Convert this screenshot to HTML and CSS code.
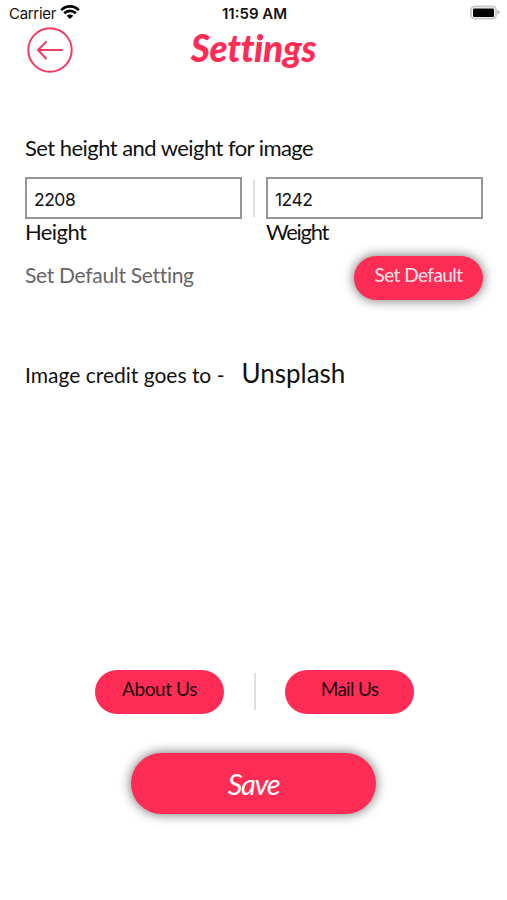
FILE: index.html
```html
<!DOCTYPE html>
<html lang="en">
<head>
<meta charset="utf-8">
<title>Settings</title>
<link rel="stylesheet" href="styles.css">
</head>
<body>
<div class="status">
  <div class="carrier"><span>Carrier</span>
    <svg width="20" height="15" viewBox="0 0 20 15"><path d="M1.2 5.1C6.3.1 13.700.1 18.8 5.1M4.2 8.3c3.4-3.2 8.2-3.2 11.6 0" fill="none" stroke="#000" stroke-width="2.6"/><path d="M6.7 10.8c2-1.7 4.6-1.7 6.6 0L10 14.1z"/></svg>
  </div>
  <div class="time">11:59 AM</div>
  <svg class="battery" width="31" height="15" viewBox="0 0 31 15"><rect x="2" y="1.500" width="25" height="12" rx="3.5" fill="#fff" stroke="#cbcbcb" stroke-width="2"/><rect x="4" y="3.500" width="21" height="8.500" rx="1"/><path d="M28.500 5v4.500q2-.8 2-2.200t-2-2.300" fill="#aaa"/></svg>
</div>
<header class="header">
  <button class="back" aria-label="Back"><svg width="46" height="46" viewBox="0 0 46 46" fill="none" stroke="#f23b60" stroke-width="2"><circle cx="23" cy="23" r="21.7"/><path d="M35 23H11.5M19 15l-8 8 8 8.500" stroke-linecap="round" stroke-linejoin="round"/></svg></button>
  <h1 class="title">Settings</h1>
</header>
<main class="content">
  <h2 class="heading"><span class="t-heading">Set height and weight for image</span></h2>
  <div class="fields">
    <label class="field"><input value="2208"><span class="t-height">Height</span></label>
    <i class="divider"></i>
    <label class="field"><input value="1242"><span class="t-weight">Weight</span></label>
  </div>
  <div class="default-row"><span class="t-setting">Set Default Setting</span><button class="pill shadow light"><span class="t-default">Set Default</span></button></div>
  <div class="credit"><span class="t-credit">Image credit goes to -</span><span class="t-unsplash">Unsplash</span></div>
  <div class="links">
    <button class="pill"><span class="t-about">About Us</span></button>
    <i class="divider"></i>
    <button class="pill"><span class="t-mail">Mail Us</span></button>
  </div>
  <button class="save shadow"><span class="t-save">Save</span></button>
</main>
</body>
</html>
```
FILE: styles.css
```css
* { box-sizing: border-box; }
body { margin: 0; width: 507px; height: 900px; overflow: hidden; background: #fff; color: #111; font-family: Lato, "Open Sans", sans-serif; font-variant-ligatures: none; }
button { border: 0; padding: 0; background: none; font: inherit; color: inherit; }
svg { display: block; }
span { white-space: nowrap; }
.status { display: grid; grid-template-columns: 1fr auto 1fr; height: 27px; padding: 5px 7px 0 9px; font: 15px/18px Inter, sans-serif; }
.carrier { display: flex; gap: 4px; letter-spacing: -.3px; }
.time { font-weight: 600; }
.battery { justify-self: end; }
.header { display: grid; grid-template-columns: 46px 1fr 46px; height: 46px; padding: 0 27px; }
.back { width: 46px; height: 46px; }
.title { margin: 0; text-align: center; color: #ff2d55; font-size: 37px; line-height: 41px; font-weight: 900; font-style: italic; letter-spacing: -.3px; }
.content { padding: 61px 24px 0 25px; }
.heading { margin: 0; height: 43px; font-size: 22px; line-height: 28px; font-weight: 400; }
.fields { display: flex; justify-content: space-between; height: 79px; }
.field { display: flex; flex-direction: column; width: 217px; font-size: 22px; line-height: 25px; }
.field input { width: 217px; height: 42px; margin: 0; padding: 3px 7px 0; border: 2px solid #969696; border-radius: 0; color: #111; font: 17.5px/22px Inter, sans-serif; letter-spacing: -.5px; }
.divider { width: 2px; height: 37px; margin-top: 3px; background: #dedede; }
.default-row { display: flex; justify-content: space-between; height: 90px; font-size: 21px; line-height: 37px; color: #666; }
.pill { display: flex; justify-content: center; width: 129px; height: 44px; border-radius: 22px; background: #ff2d55; color: #210710; font-size: 19px; line-height: 37px; }
.light { color: #ffe5e9; }
.shadow { box-shadow: 0 0 11px 1px rgba(0,0,0,.5); }
.credit { display: flex; gap: 17px; align-items: baseline; height: 324px; line-height: 54px; font-size: 21px; }
.links { display: flex; justify-content: space-between; width: 319px; margin: 0 0 0 70px; height: 83px; }
.save { display: flex; justify-content: center; width: 245px; height: 61px; margin-left: 106px; border-radius: 31px; background: #ff2d55; color: #fff; line-height: 62px; font-size: 29px; font-style: italic; letter-spacing: -1.3px; }
.t-heading { letter-spacing: -.55px; }
.t-height { letter-spacing: -.6px; }
.t-weight { letter-spacing: -1.3px; }
.t-setting { letter-spacing: -.3px; }
.t-default { letter-spacing: -.55px; }
.t-about { letter-spacing: -.4px; }
.t-mail { letter-spacing: -.7px; }
.t-unsplash { font-size: 26px; }
```
